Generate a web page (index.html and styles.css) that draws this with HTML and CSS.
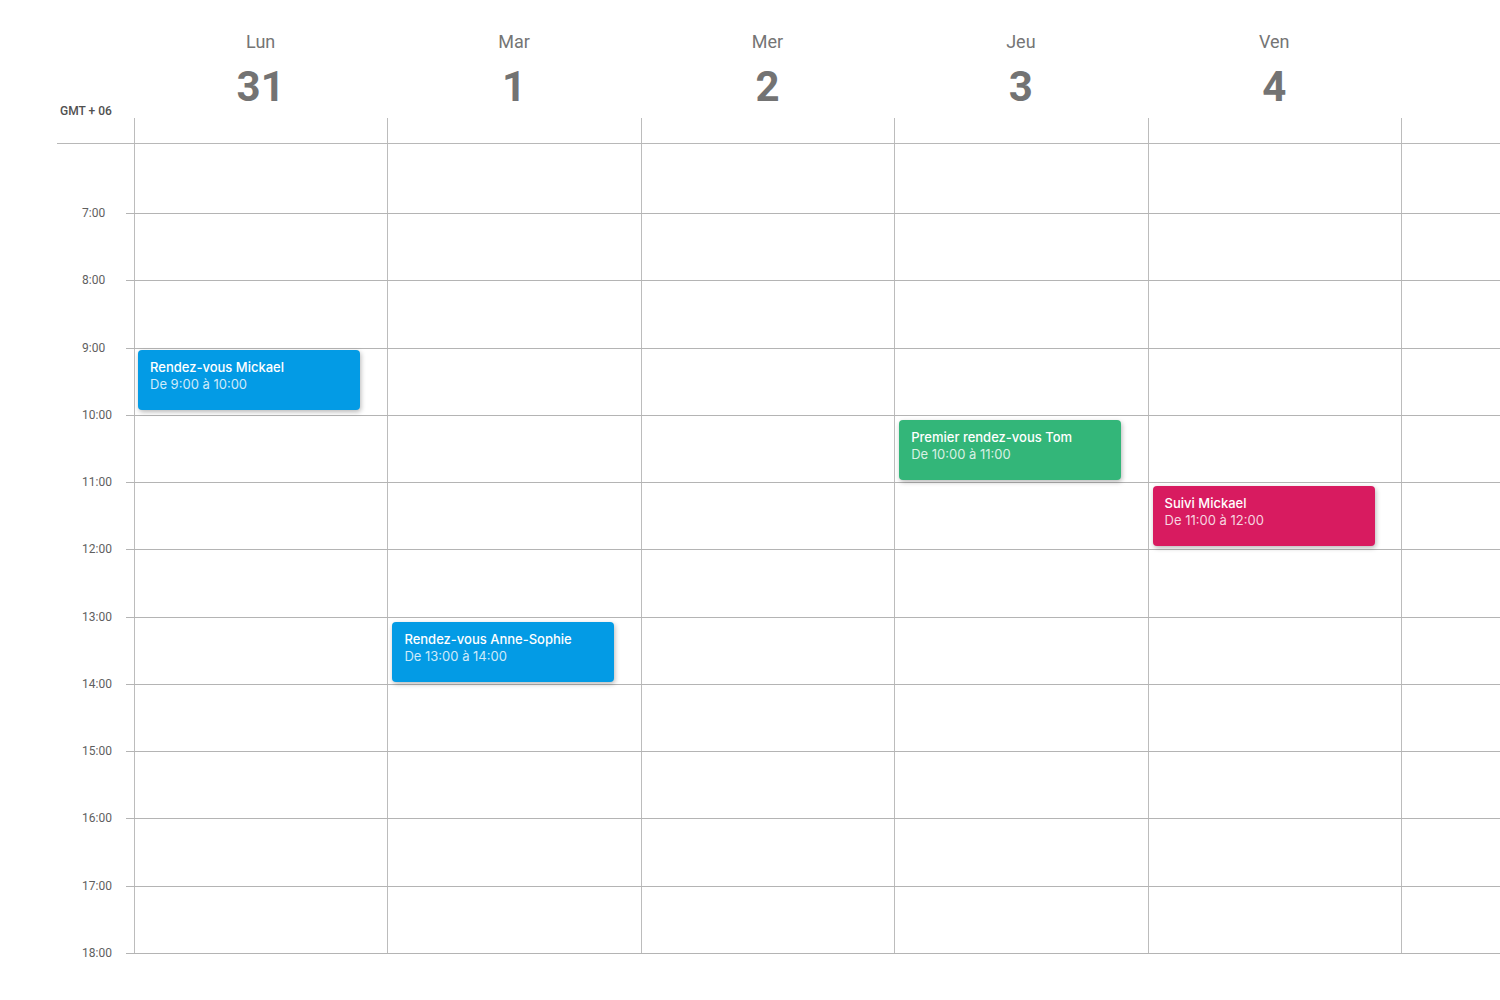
FILE: index.html
```html
<!DOCTYPE html>
<html lang="fr">
<head>
<meta charset="utf-8">
<title>Semaine</title>
<link rel="stylesheet" href="styles.css">
</head>
<body>
<div class="calendar">
  <header class="head">
    <div class="head-gutter"><span class="tz">GMT + 06</span></div>
    <div class="days">
      <div class="day"><div class="dname">Lun</div><div class="dnum">31</div></div>
      <div class="day"><div class="dname">Mar</div><div class="dnum">1</div></div>
      <div class="day"><div class="dname">Mer</div><div class="dnum">2</div></div>
      <div class="day"><div class="dname">Jeu</div><div class="dnum">3</div></div>
      <div class="day"><div class="dname">Ven</div><div class="dnum">4</div></div>
      <div class="day"></div>
    </div>
  </header>

  <div class="allday">
    <div class="allday-gutter"></div>
    <div class="cells"><div class="cell"></div><div class="cell"></div><div class="cell"></div><div class="cell"></div><div class="cell"></div><div class="cell"></div></div>
  </div>

  <div class="row first">
    <div class="time"></div>
    <div class="cells nobar"><div class="cell"></div><div class="cell"></div><div class="cell"></div><div class="cell"></div><div class="cell"></div><div class="cell"></div></div>
  </div>

  <div class="row"><div class="time"><span>7:00</span></div>
    <div class="cells"><div class="cell"></div><div class="cell"></div><div class="cell"></div><div class="cell"></div><div class="cell"></div><div class="cell"></div></div></div>
  <div class="row"><div class="time"><span>8:00</span></div>
    <div class="cells"><div class="cell"></div><div class="cell"></div><div class="cell"></div><div class="cell"></div><div class="cell"></div><div class="cell"></div></div></div>
  <div class="row"><div class="time"><span>9:00</span></div>
    <div class="cells">
      <div class="cell"><div class="event blue early"><div class="ev-title">Rendez-vous Mickael</div><div class="ev-time">De 9:00 à 10:00</div></div></div>
      <div class="cell"></div><div class="cell"></div><div class="cell"></div><div class="cell"></div><div class="cell"></div></div></div>
  <div class="row"><div class="time"><span>10:00</span></div>
    <div class="cells">
      <div class="cell"></div><div class="cell"></div><div class="cell"></div>
      <div class="cell"><div class="event green"><div class="ev-title">Premier rendez-vous Tom</div><div class="ev-time">De 10:00 à 11:00</div></div></div>
      <div class="cell"></div><div class="cell"></div></div></div>
  <div class="row"><div class="time"><span>11:00</span></div>
    <div class="cells">
      <div class="cell"></div><div class="cell"></div><div class="cell"></div><div class="cell"></div>
      <div class="cell"><div class="event pink"><div class="ev-title">Suivi Mickael</div><div class="ev-time">De 11:00 à 12:00</div></div></div>
      <div class="cell"></div></div></div>
  <div class="row"><div class="time"><span>12:00</span></div>
    <div class="cells"><div class="cell"></div><div class="cell"></div><div class="cell"></div><div class="cell"></div><div class="cell"></div><div class="cell"></div></div></div>
  <div class="row"><div class="time"><span>13:00</span></div>
    <div class="cells">
      <div class="cell"></div>
      <div class="cell"><div class="event blue"><div class="ev-title">Rendez-vous Anne-Sophie</div><div class="ev-time">De 13:00 à 14:00</div></div></div>
      <div class="cell"></div><div class="cell"></div><div class="cell"></div><div class="cell"></div></div></div>
  <div class="row"><div class="time"><span>14:00</span></div>
    <div class="cells"><div class="cell"></div><div class="cell"></div><div class="cell"></div><div class="cell"></div><div class="cell"></div><div class="cell"></div></div></div>
  <div class="row"><div class="time"><span>15:00</span></div>
    <div class="cells"><div class="cell"></div><div class="cell"></div><div class="cell"></div><div class="cell"></div><div class="cell"></div><div class="cell"></div></div></div>
  <div class="row"><div class="time"><span>16:00</span></div>
    <div class="cells"><div class="cell"></div><div class="cell"></div><div class="cell"></div><div class="cell"></div><div class="cell"></div><div class="cell"></div></div></div>
  <div class="row"><div class="time"><span>17:00</span></div>
    <div class="cells"><div class="cell"></div><div class="cell"></div><div class="cell"></div><div class="cell"></div><div class="cell"></div><div class="cell"></div></div></div>
  <div class="row end"><div class="time"><span>18:00</span></div>
    <div class="cells"></div></div>
</div>
</body>
</html>
```

FILE: styles.css
```css
* { box-sizing: border-box; }
html, body { margin: 0; padding: 0; background: #fff; }
body { font-family: Roboto, "Liberation Sans", sans-serif; width: 1500px; height: 1000px; overflow: hidden; }

.calendar { display: flex; flex-direction: column; }

.head { display: flex; height: 118px; }
.head-gutter { width: 134px; display: flex; align-items: flex-end; padding: 0 0 0 60px; }
.tz { font-size: 12px; font-weight: 500; color: #505050; line-height: 14px; }
.days { flex: 1; display: grid; grid-template-columns: repeat(5, 253.4px) 1fr; }
.day { display: flex; flex-direction: column; align-items: center; padding-top: 32px; }
.dname { font-size: 18px; line-height: 20px; color: #757575; }
.dnum { font-size: 42px; line-height: 50px; font-weight: 700; color: #737373; margin-top: 10px; }

.allday { display: flex; height: 26px; margin-left: 57px; border-bottom: 1px solid #b8b8b8; }
.allday-gutter { width: 77px; }

.cells { flex: 1; display: grid; grid-template-columns: repeat(5, 253.4px) 1fr; }
.cell { border-left: 1px solid #bcbcbc; position: relative; }

.row { display: flex; height: 67.27px; }
.row.first { height: 69px; }
.row .cells { border-top: 1px solid #b4b4b4; }
.row.first .cells { border-top: 0; }
.time { width: 134px; position: relative; }
.row:not(.first) .time::after { content: ""; display: block; margin-left: 126px; border-top: 1px solid #b4b4b4; }
.time span { position: absolute; left: 82px; top: 0; transform: translateY(-50%); font-size: 12px; line-height: 14px; color: #5f5f5f; }
.row.end { height: 1px; }

.event { position: absolute; top: 4px; left: 4px; width: 222px; height: 60px; border-radius: 4px; padding: 9px 12px; color: #fff; font-family: Inter, "Noto Sans", sans-serif; font-size: 13px; line-height: 17px; box-shadow: 1px 2px 5px rgba(0,0,0,0.28); }
.ev-title { font-weight: 500; }
.ev-time { color: rgba(255,255,255,0.82); }
.blue { background: #039be5; }
.green { background: #33b679; }
.pink { background: #d81b60; top: 3px; }
.event.early { top: 1px; left: 3px; }
```
